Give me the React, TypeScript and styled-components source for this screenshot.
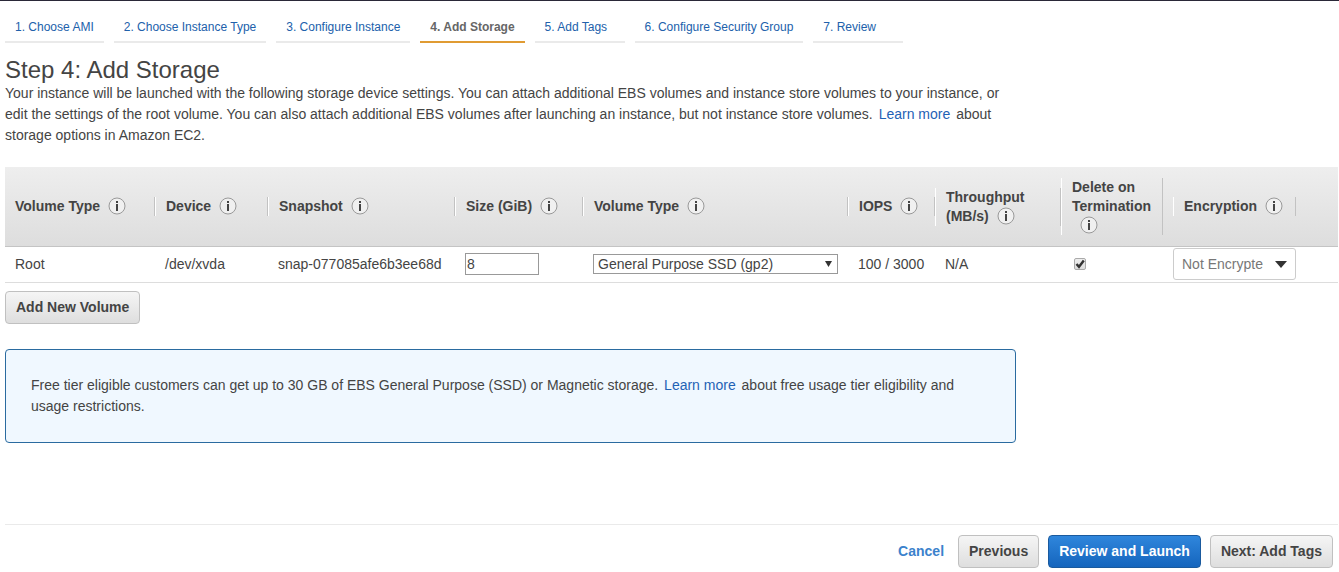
import React from "react";
import styled, { createGlobalStyle, css } from "styled-components";

const GlobalStyle = createGlobalStyle`
  *, *::before, *::after { box-sizing: border-box; }
  body {
    margin: 0;
    background: #fff;
    color: #444;
    font: 14px/21px "Liberation Sans", Arial, Helvetica, sans-serif;
  }
  button, input, select { font: inherit; color: inherit; }
`;

const Page = styled.div`
  display: flex;
  flex-direction: column;
  min-height: 100vh;
  padding: 0 1px 0 5px;
`;

const TopBar = styled.header`
  height: 1px;
  margin: 0 -1px 0 -5px;
  background: #2a2838;
`;

const Steps = styled.nav`
  display: flex;
  flex-wrap: wrap;
  gap: 10px;
  padding-top: 14px;
`;

const Step = styled.a<{ $current?: boolean }>`
  min-width: 90px;
  height: 28px;
  padding: 0 10px;
  border-bottom: 2px solid #eaeaea;
  font-size: 12px;
  line-height: 24px;
  color: #2161ab;
  text-decoration: none;
  ${(p) =>
    p.$current &&
    css`
      border-color: #e09b33;
      color: #666;
      font-weight: bold;
    `}
`;

const Title = styled.h1`
  margin: 14px 0 0;
  font-size: 24px;
  line-height: 26px;
  font-weight: normal;
`;

const Intro = styled.p`
  max-width: 1010px;
  margin: 0 0 21px;
`;

const Link = styled.a`
  margin: 0 2px;
  color: #1f62b5;
  text-decoration: none;
`;

const Table = styled.table`
  width: 100%;
  table-layout: fixed;
  border-collapse: separate;
  border-spacing: 0;
`;

const Col = styled.col<{ $width?: number }>`
  width: ${(p) => (p.$width ? `${p.$width}px` : "auto")};
`;

const HeadRow = styled.tr`
  background: linear-gradient(#eeeeee, #dddddd);
`;

const HeadCell = styled.th<{ $inset?: boolean }>`
  height: 80px;
  padding: 0 0 0 ${(p) => (p.$inset ? 10 : 0)}px;
  border-bottom: 1px solid #c4c4c4;
  text-align: left;
  vertical-align: middle;
  line-height: 19px;
`;

const HeadLabel = styled.div<{ $first?: boolean; $width?: number }>`
  max-width: ${(p) => (p.$width ? `${p.$width}px` : "none")};
  padding: 0 9px 0 10px;
  border-left: ${(p) => (p.$first ? "0" : "1px solid #fff")};
  border-right: 1px solid #c2c2c2;
`;

const InfoButton = styled.button`
  display: inline-block;
  width: 18px;
  height: 18px;
  margin: 0 0 0 8px;
  padding: 0;
  border: 0;
  background: none;
  vertical-align: -4px;

  svg { display: block; }
`;

const Cell = styled.td<{ $pad?: number; $control?: boolean }>`
  height: 36px;
  padding: 0 0 ${(p) => (p.$control ? 1 : 0)}px ${(p) => p.$pad ?? 10}px;
  border-bottom: 1px solid #ddd;
  vertical-align: middle;
  white-space: nowrap;
`;

const SizeInput = styled.input`
  display: block;
  width: 74px;
  height: 22px;
  padding: 0 1px;
  border: 1px solid #999;
  border-radius: 0;
  background: #fff;
`;

const SelectWrap = styled.div<{ $width: number }>`
  display: grid;
  align-items: center;
  width: ${(p) => p.$width}px;

  > * { grid-area: 1 / 1; }
  > svg { justify-self: end; pointer-events: none; }
`;

const TypeSelect = styled.select`
  appearance: none;
  width: 100%;
  height: 20px;
  padding: 0 20px 0 4px;
  border: 1px solid #999;
  border-radius: 0;
  background: #fff;
  line-height: 18px;
`;

const EncryptionSelect = styled.select`
  appearance: none;
  width: 100%;
  height: 32px;
  padding: 0 32px 0 8px;
  border: 1px solid #ccc;
  border-radius: 3px;
  background: #fff;
  color: #777;
`;

const SmallArrow = styled.svg`
  margin-right: 6px;
`;

const LargeArrow = styled.svg`
  margin-right: 9px;
`;

const CheckWrap = styled.span`
  display: grid;
  width: 12px;
  height: 12px;

  > * { grid-area: 1 / 1; }
  > svg { display: none; pointer-events: none; }
  > input:checked + svg { display: block; }
`;

const CheckInput = styled.input`
  appearance: none;
  width: 12px;
  height: 12px;
  margin: 0;
  border: 1px solid #aaa;
  border-radius: 2px;
  background: linear-gradient(#eee, #ddd);
`;

const Button = styled.button<{ $primary?: boolean }>`
  height: 33px;
  padding: 0 10px;
  border: 1px solid #c0c0c0;
  border-radius: 4px;
  background: linear-gradient(#f5f5f5, #dedede);
  color: #444;
  font-weight: bold;
  white-space: nowrap;
  ${(p) =>
    p.$primary &&
    css`
      border-color: #1a5a9e;
      background: linear-gradient(#2f86dc, #1565bd);
      color: #fff;
    `}
`;

const AddRow = styled.div`
  padding-top: 8px;
`;

const Notice = styled.aside`
  max-width: 1011px;
  margin: 25px 0 40px;
  padding: 25px 40px 25px 25px;
  border: 1px solid #2a6ba0;
  border-radius: 4px;
  background: #f0f8ff;

  p { margin: 0; }
`;

const Footer = styled.footer`
  display: flex;
  align-items: center;
  justify-content: flex-end;
  gap: 9px;
  height: 48px;
  margin-top: auto;
  padding: 6px 5px 0 0;
  border-top: 1px solid #eaeaea;
`;

const CancelLink = styled.a`
  margin-right: 5px;
  color: #3b82cc;
  font-weight: bold;
  text-decoration: none;
`;

function Info({ label }: { label: string }) {
  return (
    <InfoButton type="button" aria-label={`About ${label}`}>
      <svg width="18" height="18" viewBox="0 0 18 18">
        <circle cx="9" cy="9" r="8" fill="#f0f0f0" stroke="#999" />
        <rect x="8" y="4" width="2" height="2" fill="#444" />
        <rect x="8" y="7" width="2" height="7" fill="#444" />
      </svg>
    </InfoButton>
  );
}

const steps = [
  "1. Choose AMI",
  "2. Choose Instance Type",
  "3. Configure Instance",
  "4. Add Storage",
  "5. Add Tags",
  "6. Configure Security Group",
  "7. Review",
];

const columns: { label: string; width?: number }[] = [
  { label: "Volume Type", width: 150 },
  { label: "Device", width: 113 },
  { label: "Snapshot", width: 187 },
  { label: "Size (GiB)", width: 128 },
  { label: "Volume Type", width: 265 },
  { label: "IOPS", width: 87 },
  { label: "Throughput (MB/s)", width: 126 },
  { label: "Delete on Termination", width: 102 },
  { label: "Encryption" },
];

export default function App() {
  const last = columns.length - 1;
  return (
    <>
      <GlobalStyle />
      <Page>
        <TopBar />
        <Steps aria-label="Launch steps">
          {steps.map((s, i) => (
            <Step key={s} href="#" $current={i === 3} aria-current={i === 3 ? "step" : undefined}>
              {s}
            </Step>
          ))}
        </Steps>
        <Title>Step 4: Add Storage</Title>
        <Intro>
          Your instance will be launched with the following storage device settings. You can attach
          additional EBS volumes and instance store volumes to your instance, or edit the settings of
          the root volume. You can also attach additional EBS volumes after launching an instance, but
          not instance store volumes. <Link href="#">Learn more</Link> about storage options in Amazon
          EC2.
        </Intro>
        <Table>
          <colgroup>
            {columns.map((c, i) => (
              <Col key={i} $width={c.width} />
            ))}
          </colgroup>
          <thead>
            <HeadRow>
              {columns.map((c, i) => (
                <HeadCell key={i} scope="col" $inset={i === last}>
                  <HeadLabel $first={i === 0} $width={i === last ? 123 : undefined}>
                    {c.label}
                    <Info label={c.label} />
                  </HeadLabel>
                </HeadCell>
              ))}
            </HeadRow>
          </thead>
          <tbody>
            <tr>
              <Cell>Root</Cell>
              <Cell>/dev/xvda</Cell>
              <Cell>snap-077085afe6b3ee68d</Cell>
              <Cell $control>
                <SizeInput aria-label="Size (GiB)" defaultValue="8" />
              </Cell>
              <Cell $control>
                <SelectWrap $width={245}>
                  <TypeSelect aria-label="Volume type">
                    <option>General Purpose SSD (gp2)</option>
                  </TypeSelect>
                  <SmallArrow width="7" height="6" viewBox="0 0 7 6">
                    <path d="M0 0H7L3.5 6Z" fill="#333" />
                  </SmallArrow>
                </SelectWrap>
              </Cell>
              <Cell>100 / 3000</Cell>
              <Cell>N/A</Cell>
              <Cell $control $pad={13}>
                <CheckWrap>
                  <CheckInput type="checkbox" defaultChecked aria-label="Delete on termination" />
                  <svg width="12" height="12" viewBox="0 0 12 12">
                    <path d="M2.5 6L5 8.8L9.8 2.6" fill="none" stroke="#333" strokeWidth="2.4" />
                  </svg>
                </CheckWrap>
              </Cell>
              <Cell $control>
                <SelectWrap $width={123}>
                  <EncryptionSelect aria-label="Encryption">
                    <option>Not Encrypted</option>
                  </EncryptionSelect>
                  <LargeArrow width="12" height="7" viewBox="0 0 12 7">
                    <path d="M0 0H12L6 7Z" fill="#333" />
                  </LargeArrow>
                </SelectWrap>
              </Cell>
            </tr>
          </tbody>
        </Table>
        <AddRow>
          <Button type="button">Add New Volume</Button>
        </AddRow>
        <Notice>
          <p>
            Free tier eligible customers can get up to 30 GB of EBS General Purpose (SSD) or Magnetic
            storage. <Link href="#">Learn more</Link> about free usage tier eligibility and usage
            restrictions.
          </p>
        </Notice>
        <Footer>
          <CancelLink href="#">Cancel</CancelLink>
          <Button type="button">Previous</Button>
          <Button type="button" $primary>
            Review and Launch
          </Button>
          <Button type="button">Next: Add Tags</Button>
        </Footer>
      </Page>
    </>
  );
}
